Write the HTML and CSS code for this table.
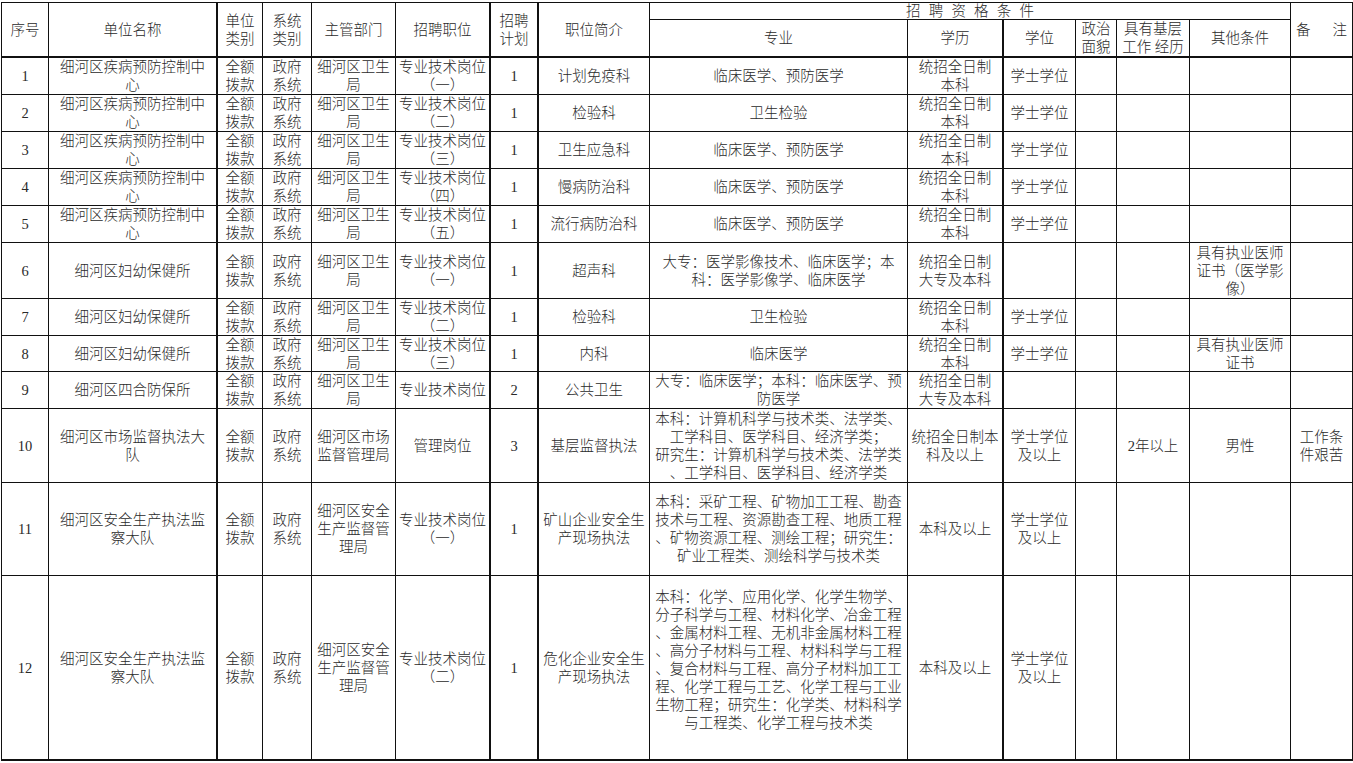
FILE: index.html
```html
<!DOCTYPE html>
<html lang="zh-CN">
<head>
<meta charset="utf-8">
<title>招聘岗位表</title>
<link rel="stylesheet" href="styles.css">
</head>
<body>
<div class="sheet">
  <div class="row head">
    <div class="c hb">序号</div>
    <div class="c hb">单位名称</div>
    <div class="c hb">单位<br>类别</div>
    <div class="c hb">系统<br>类别</div>
    <div class="c hb">主管部门</div>
    <div class="c hb">招聘职位</div>
    <div class="c hb">招聘<br>计划</div>
    <div class="c hb">职位简介</div>
    <div class="c group">招聘资格条件</div>
    <div class="c hb note-h"><span>备</span><span>注</span></div>
    <div class="c hb2">专业</div>
    <div class="c hb2 tk">学历</div>
    <div class="c hb2">学位</div>
    <div class="c hb2">政治<br>面貌</div>
    <div class="c hb2">具有基层<br>工作 经历</div>
    <div class="c hb2">其他条件</div>
  </div>

  <div class="row">
    <div class="c">1</div><div class="c">细河区疾病预防控制中<br>心</div><div class="c">全额<br>拨款</div><div class="c">政府<br>系统</div><div class="c">细河区卫生<br>局</div><div class="c">专业技术岗位<br>（一）</div><div class="c">1</div><div class="c">计划免疫科</div><div class="c">临床医学、预防医学</div><div class="c">统招全日制<br>本科</div><div class="c">学士学位</div><div class="c"></div><div class="c"></div><div class="c"></div><div class="c"></div>
  </div>
  <div class="row">
    <div class="c">2</div><div class="c">细河区疾病预防控制中<br>心</div><div class="c">全额<br>拨款</div><div class="c">政府<br>系统</div><div class="c">细河区卫生<br>局</div><div class="c">专业技术岗位<br>（二）</div><div class="c">1</div><div class="c">检验科</div><div class="c">卫生检验</div><div class="c">统招全日制<br>本科</div><div class="c">学士学位</div><div class="c"></div><div class="c"></div><div class="c"></div><div class="c"></div>
  </div>
  <div class="row">
    <div class="c">3</div><div class="c">细河区疾病预防控制中<br>心</div><div class="c">全额<br>拨款</div><div class="c">政府<br>系统</div><div class="c">细河区卫生<br>局</div><div class="c">专业技术岗位<br>（三）</div><div class="c">1</div><div class="c">卫生应急科</div><div class="c">临床医学、预防医学</div><div class="c">统招全日制<br>本科</div><div class="c">学士学位</div><div class="c"></div><div class="c"></div><div class="c"></div><div class="c"></div>
  </div>
  <div class="row">
    <div class="c">4</div><div class="c">细河区疾病预防控制中<br>心</div><div class="c">全额<br>拨款</div><div class="c">政府<br>系统</div><div class="c">细河区卫生<br>局</div><div class="c">专业技术岗位<br>（四）</div><div class="c">1</div><div class="c">慢病防治科</div><div class="c">临床医学、预防医学</div><div class="c">统招全日制<br>本科</div><div class="c">学士学位</div><div class="c"></div><div class="c"></div><div class="c"></div><div class="c"></div>
  </div>
  <div class="row">
    <div class="c">5</div><div class="c">细河区疾病预防控制中<br>心</div><div class="c">全额<br>拨款</div><div class="c">政府<br>系统</div><div class="c">细河区卫生<br>局</div><div class="c">专业技术岗位<br>（五）</div><div class="c">1</div><div class="c">流行病防治科</div><div class="c">临床医学、预防医学</div><div class="c">统招全日制<br>本科</div><div class="c">学士学位</div><div class="c"></div><div class="c"></div><div class="c"></div><div class="c"></div>
  </div>
  <div class="row">
    <div class="c">6</div><div class="c">细河区妇幼保健所</div><div class="c">全额<br>拨款</div><div class="c">政府<br>系统</div><div class="c">细河区卫生<br>局</div><div class="c">专业技术岗位<br>（一）</div><div class="c">1</div><div class="c">超声科</div><div class="c">大专：医学影像技术、临床医学；本<br>科：医学影像学、临床医学</div><div class="c">统招全日制<br>大专及本科</div><div class="c"></div><div class="c"></div><div class="c"></div><div class="c">具有执业医师<br>证书（医学影<br>像）</div><div class="c"></div>
  </div>
  <div class="row">
    <div class="c">7</div><div class="c">细河区妇幼保健所</div><div class="c">全额<br>拨款</div><div class="c">政府<br>系统</div><div class="c">细河区卫生<br>局</div><div class="c">专业技术岗位<br>（二）</div><div class="c">1</div><div class="c">检验科</div><div class="c">卫生检验</div><div class="c">统招全日制<br>本科</div><div class="c">学士学位</div><div class="c"></div><div class="c"></div><div class="c"></div><div class="c"></div>
  </div>
  <div class="row">
    <div class="c">8</div><div class="c">细河区妇幼保健所</div><div class="c">全额<br>拨款</div><div class="c">政府<br>系统</div><div class="c">细河区卫生<br>局</div><div class="c">专业技术岗位<br>（三）</div><div class="c">1</div><div class="c">内科</div><div class="c">临床医学</div><div class="c">统招全日制<br>本科</div><div class="c">学士学位</div><div class="c"></div><div class="c"></div><div class="c">具有执业医师<br>证书</div><div class="c"></div>
  </div>
  <div class="row">
    <div class="c">9</div><div class="c">细河区四合防保所</div><div class="c">全额<br>拨款</div><div class="c">政府<br>系统</div><div class="c">细河区卫生<br>局</div><div class="c">专业技术岗位</div><div class="c">2</div><div class="c">公共卫生</div><div class="c">大专：临床医学；本科：临床医学、预<br>防医学</div><div class="c">统招全日制<br>大专及本科</div><div class="c"></div><div class="c"></div><div class="c"></div><div class="c"></div><div class="c"></div>
  </div>
  <div class="row">
    <div class="c">10</div><div class="c">细河区市场监督执法大<br>队</div><div class="c">全额<br>拨款</div><div class="c">政府<br>系统</div><div class="c">细河区市场<br>监督管理局</div><div class="c">管理岗位</div><div class="c">3</div><div class="c">基层监督执法</div><div class="c">本科：计算机科学与技术类、法学类、<br>工学科目、医学科目、经济学类；<br>研究生：计算机科学与技术类、法学类<br>、工学科目、医学科目、经济学类</div><div class="c">统招全日制本<br>科及以上</div><div class="c">学士学位<br>及以上</div><div class="c"></div><div class="c">2年以上</div><div class="c">男性</div><div class="c">工作条<br>件艰苦</div>
  </div>
  <div class="row">
    <div class="c">11</div><div class="c">细河区安全生产执法监<br>察大队</div><div class="c">全额<br>拨款</div><div class="c">政府<br>系统</div><div class="c">细河区安全<br>生产监督管<br>理局</div><div class="c">专业技术岗位<br>（一）</div><div class="c">1</div><div class="c">矿山企业安全生<br>产现场执法</div><div class="c">本科：采矿工程、矿物加工工程、勘查<br>技术与工程、资源勘查工程、地质工程<br>、矿物资源工程、测绘工程；研究生：<br>矿业工程类、测绘科学与技术类</div><div class="c">本科及以上</div><div class="c">学士学位<br>及以上</div><div class="c"></div><div class="c"></div><div class="c"></div><div class="c"></div>
  </div>
  <div class="row last">
    <div class="c">12</div><div class="c">细河区安全生产执法监<br>察大队</div><div class="c">全额<br>拨款</div><div class="c">政府<br>系统</div><div class="c">细河区安全<br>生产监督管<br>理局</div><div class="c">专业技术岗位<br>（二）</div><div class="c">1</div><div class="c">危化企业安全生<br>产现场执法</div><div class="c raise">本科：化学、应用化学、化学生物学、<br>分子科学与工程、材料化学、冶金工程<br>、金属材料工程、无机非金属材料工程<br>、高分子材料与工程、材料科学与工程<br>、复合材料与工程、高分子材料加工工<br>程、化学工程与工艺、化学工程与工业<br>生物工程；研究生：化学类、材料科学<br>与工程类、化学工程与技术类</div><div class="c">本科及以上</div><div class="c">学士学位<br>及以上</div><div class="c"></div><div class="c"></div><div class="c"></div><div class="c"></div>
  </div>
</div>
</body>
</html>
```

FILE: styles.css
```css
* { box-sizing: border-box; }

html, body {
  margin: 0;
  padding: 0;
  background: #ffffff;
}

body {
  font-family: "Liberation Serif", "Noto Sans CJK SC", sans-serif;
  font-size: 14.5px;
  font-weight: 300;
  line-height: 18px;
  color: #2a2a2a;
}

.sheet {
  margin: 2px 0 0 1px;
  width: 1352px;
  display: grid;
  grid-template-columns: 47px 169px 45px 49px 84px 95px 48px 111px 258px 96px 72px 41px 73px 101px 62px;
  grid-template-rows: 17px 38px 37px 37px 37px 37px 37px 56px 37px 36px 37px 74px 93px 185px;
  border-top: 1px solid #111;
  border-left: 1px solid #111;
}

.row { display: contents; }

.c {
  display: flex;
  align-items: center;
  justify-content: center;
  text-align: center;
  white-space: nowrap;
  overflow: hidden;
  border-right: 1px solid #111;
  border-bottom: 1px solid #111;
}

/* thick vertical rules */
.row > .c:nth-child(2),
.row > .c:nth-child(6),
.row > .c:nth-child(7),
.row > .c:nth-child(10),
.head > .tk { border-right-width: 2px; }

.head > .c:nth-child(10) { border-right-width: 1px; }
.head > .c:nth-child(12) { border-right-width: 2px; }

/* header */
.hb { grid-row: span 2; border-bottom-width: 2px; }
.hb2 { border-bottom-width: 2px; }

.group {
  grid-column: span 6;
  justify-content: flex-start;
  padding-left: 256px;
  letter-spacing: 8.2px;
  line-height: 16px;
}

.note-h {
  justify-content: space-between;
  padding: 0 5px 0 5px;
}

.last > .c { border-bottom-width: 2px; }

.raise { padding-bottom: 16px; }
```
